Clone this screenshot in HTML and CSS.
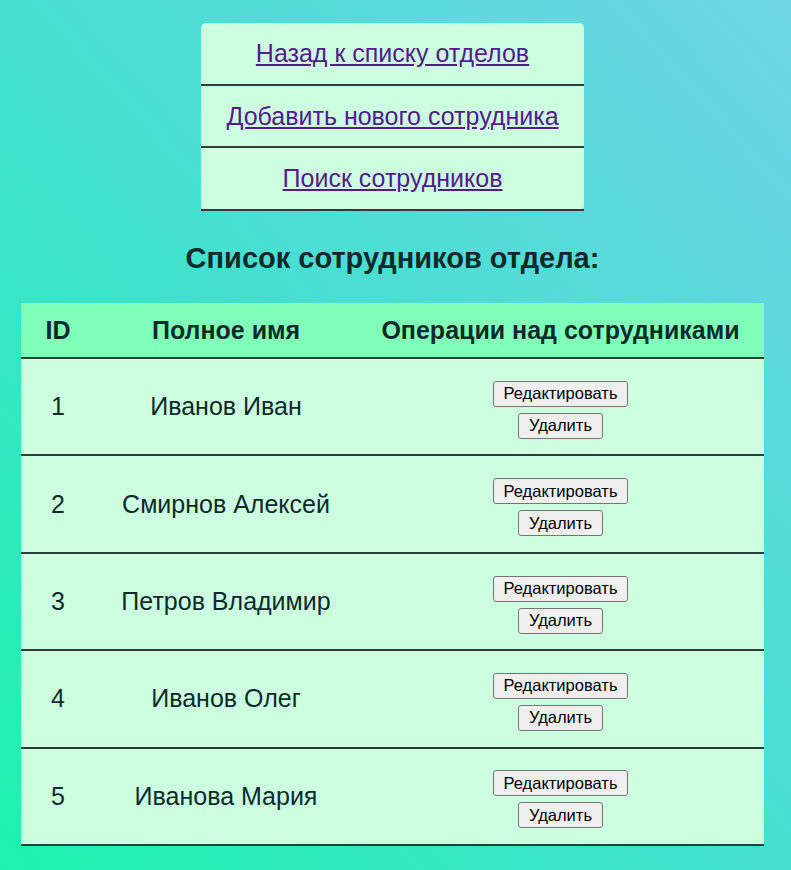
FILE: index.html
```html
<!DOCTYPE html>
<html lang="ru">
<head>
<meta charset="utf-8">
<title>Список сотрудников</title>
<link rel="stylesheet" href="styles.css">
</head>
<body>
<div class="page">
  <nav class="menu">
    <a href="#" class="menu-link">Назад к списку отделов</a>
    <a href="#" class="menu-link">Добавить нового сотрудника</a>
    <a href="#" class="menu-link">Поиск сотрудников</a>
  </nav>
  <h2 class="title">Список сотрудников отдела:</h2>
  <table class="staff">
    <thead>
      <tr>
        <th class="col-id">ID</th>
        <th class="col-name">Полное имя</th>
        <th class="col-ops">Операции над сотрудниками</th>
      </tr>
    </thead>
    <tbody>
      <tr><td>1</td><td>Иванов Иван</td><td><div class="ops"><button>Редактировать</button><button>Удалить</button></div></td></tr>
      <tr><td>2</td><td>Смирнов Алексей</td><td><div class="ops"><button>Редактировать</button><button>Удалить</button></div></td></tr>
      <tr><td>3</td><td>Петров Владимир</td><td><div class="ops"><button>Редактировать</button><button>Удалить</button></div></td></tr>
      <tr><td>4</td><td>Иванов Олег</td><td><div class="ops"><button>Редактировать</button><button>Удалить</button></div></td></tr>
      <tr><td>5</td><td>Иванова Мария</td><td><div class="ops"><button>Редактировать</button><button>Удалить</button></div></td></tr>
    </tbody>
  </table>
</div>
</body>
</html>
```

FILE: styles.css
```css
html, body {
  margin: 0;
  padding: 0;
  height: 100%;
}

body {
  background: linear-gradient(to top right, #1cf2ad 0%, #45e0d0 50%, #6dd4e5 100%);
  font-family: "Liberation Sans", Arial, sans-serif;
  color: #0c2a2a;
}

.page {
  width: 785px;
  padding-top: 23px;
  display: flex;
  flex-direction: column;
  align-items: center;
}

.menu {
  width: 383px;
  display: flex;
  flex-direction: column;
  background: #ccffe0;
  border-radius: 5px;
}

.menu-link {
  display: block;
  height: 60.7px;
  line-height: 60.7px;
  text-align: center;
  font-size: 25px;
  color: #551a8b;
  text-decoration: underline;
  border-bottom: 2px solid #2f3b3b;
}

.title {
  margin: 23px 0 21px;
  font-size: 29px;
  font-weight: bold;
  color: #0c2a2a;
  line-height: 48px;
}

.staff {
  width: 743px;
  border-collapse: collapse;
  background: #ccffe0;
  font-size: 25px;
}

.staff th {
  background: #80ffb8;
  height: 54px;
  padding: 0;
  font-weight: bold;
  border-bottom: 2px solid #2f3b3b;
  text-align: center;
}

.col-id { width: 74px; }
.col-name { width: 262px; }
.col-ops { width: 407px; }

.staff td {
  height: 95.4px;
  padding: 0;
  text-align: center;
  border-bottom: 2px solid #2f3b3b;
}

.ops {
  display: flex;
  flex-direction: column;
  align-items: center;
  gap: 6px;
  padding-top: 6px;
}

.ops button {
  font-family: "Liberation Sans", Arial, sans-serif;
  font-size: 16.5px;
  height: 26px;
  padding: 0 10px;
  color: #000;
  background: #efefef;
  border: 1px solid #767676;
  border-radius: 3px;
}
```
